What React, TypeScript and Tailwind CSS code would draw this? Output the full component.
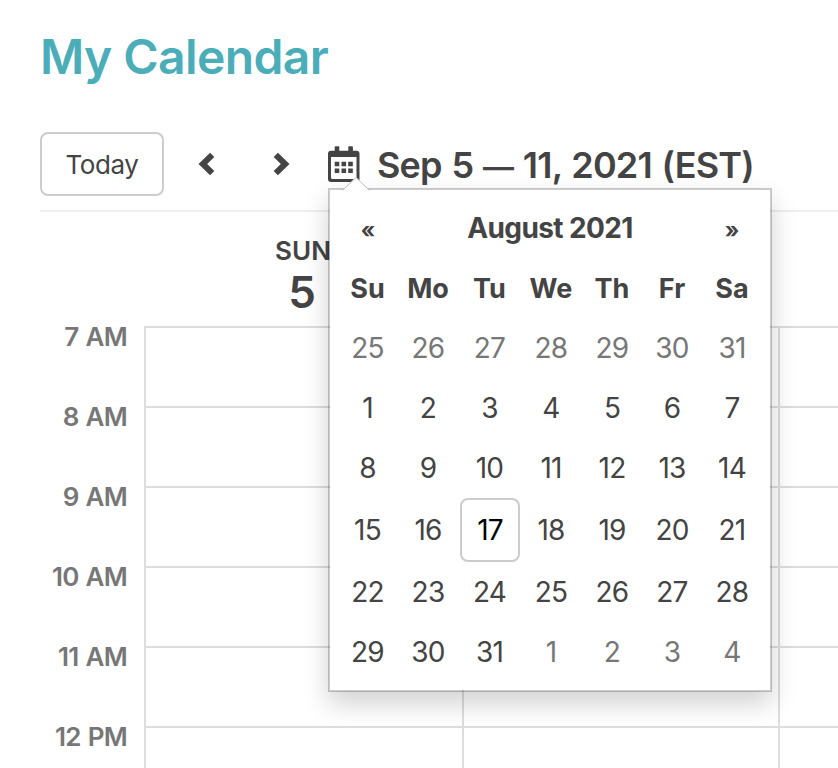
import React from "react";

const HOURS = ["7 AM", "8 AM", "9 AM", "10 AM", "11 AM", "12 PM"];

const WEEKDAYS = ["Su", "Mo", "Tu", "We", "Th", "Fr", "Sa"];

const WEEKS = [
  [25, 26, 27, 28, 29, 30, 31],
  [1, 2, 3, 4, 5, 6, 7],
  [8, 9, 10, 11, 12, 13, 14],
  [15, 16, 17, 18, 19, 20, 21],
  [22, 23, 24, 25, 26, 27, 28],
  [29, 30, 31, 1, 2, 3, 4],
];

const TODAY = 17;

const rowClass =
  "grid grid-cols-[59px_62px_61px_62px_60px_60px_60px] items-center text-center";

function isOutside(week: number, day: number) {
  return (week === 0 && day > 7) || (week === 5 && day < 7);
}

function CalendarIcon() {
  return (
    <svg className="w-8 h-9" viewBox="0 0 32 36" fill="#444">
      <rect x="6.700" y="0.300" width="4.600" height="8" rx="1" />
      <rect x="20.300" y="0.300" width="4.600" height="8" rx="1" />
      <path
        fillRule="evenodd"
        d="M3 4.700h25.500a3 3 0 0 1 3 3v25.300a3 3 0 0 1-3 3h-25.500a3 3 0 0 1-3-3V7.700a3 3 0 0 1 3-3zM3 11v20.500a1.500 1.500 0 0 0 1.500 1.500h22.500a1.500 1.500 0 0 0 1.500-1.500V11z"
      />
      <path d="M6.700 15.700h4.600v4.600H6.700zM13.500 15.700h4.600v4.600h-4.600zM20.200 15.700h4.600v4.600h-4.600zM6.700 22.500h4.600v4.600H6.700zM13.500 22.500h4.600v4.600h-4.600zM20.200 22.500h4.600v4.600h-4.600z" />
    </svg>
  );
}

function Chevron({ points }: { points: string }) {
  return (
    <svg className="w-6 h-6" viewBox="0 0 24 24" fill="none">
      <polyline
        points={points}
        stroke="#444"
        strokeWidth="6"
        strokeLinejoin="miter"
      />
    </svg>
  );
}

function DatePicker() {
  return (
    <div className="absolute left-0 top-[56px] z-10 w-[444px] h-[504px] bg-white border-2 border-black/20 bg-clip-padding p-2 shadow-[0_12px_24px_rgba(0,0,0,0.175)] text-[28px] leading-none text-[#444]">
      <svg
        className="absolute left-[11px] -top-[13px] w-[30px] h-[14px]"
        viewBox="0 0 30 14"
      >
        <path d="M1 14L15 0L29 14z" fill="#fff" />
        <path d="M1.500 13.500L15 0.500L28.500 13.500" fill="none" stroke="#bbb" />
      </svg>

      <div className="flex items-center h-[60px] font-bold text-center">
        <button className="w-[60px] pt-1 text-[22px]">«</button>
        <div className="flex-1 tracking-[-0.6px]">August 2021</div>
        <button className="w-[60px] pt-1 text-[22px]">»</button>
      </div>

      <div className={`${rowClass} h-[60px] text-[27px] font-bold`}>
        {WEEKDAYS.map((day) => (
          <span key={day}>{day}</span>
        ))}
      </div>

      {WEEKS.map((week, i) => (
        <div
          key={i}
          className={`${rowClass} tracking-[-0.8px] ${week.includes(TODAY) ? "h-[64px]" : "h-[60px]"}`}
        >
          {week.map((day) => (
            <button
              key={day}
              className={
                day === TODAY
                  ? "ml-px h-full border-2 border-[#ccc] rounded-lg text-black"
                  : isOutside(i, day)
                    ? "text-[#777]"
                    : ""
              }
            >
              {day}
            </button>
          ))}
        </div>
      ))}
    </div>
  );
}

export default function App() {
  return (
    <div className="w-[838px] h-[768px] overflow-hidden bg-white pl-10 text-[#444] font-['Inter','Liberation_Sans',sans-serif]">
      <h1 className="h-[132px] pt-[26px] text-[48px] leading-[62px] font-semibold tracking-[-0.6px] text-[#4badb7]">
        My Calendar
      </h1>

      {/* Toolbar */}
      <div className="flex h-[80px] border-b-2 border-[#eee] whitespace-nowrap">
        <button className="w-[124px] h-16 border-2 border-[#ccc] rounded-lg text-[26px] tracking-[-0.4px]">
          Today
        </button>
        <button className="ml-[30px] h-16">
          <Chevron points="18.200,2.800 8.800,12 18.200,21.200" />
        </button>
        <button className="ml-[52px] h-16">
          <Chevron points="5.800,2.800 15.200,12 5.800,21.200" />
        </button>
        <div className="relative ml-[34px] pt-[14px]">
          <CalendarIcon />
          <DatePicker />
        </div>
        <h2 className="ml-[17px] h-16 text-[36px] leading-[66px] font-semibold tracking-[-0.8px] [word-spacing:1.4px]">
          Sep 5 <span className="text-[31px]">—</span> 11, 2021 (EST)
        </h2>
      </div>

      {/* Day header */}
      <div className="flex h-[114px] pl-[105px]">
        <div className="w-[316px] pt-[26px] text-center font-semibold">
          <div className="text-[26px] leading-[26px]">SUN</div>
          <div className="pr-[2px] text-[44px] leading-[56px]">5</div>
        </div>
      </div>

      {/* Hours */}
      {HOURS.map((hour) => (
        <div key={hour} className="flex h-20">
          <div className="w-[104px] pr-[17px] text-right text-[26px] leading-[22px] font-semibold tracking-[-0.7px] [word-spacing:1px] text-[#777]">
            {hour}
          </div>
          <div className="w-[318px] border-t-2 border-l-2 border-[#ddd]" />
          <div className="w-[316px] border-t-2 border-l-2 border-[#ddd]" />
          <div className="flex-1 border-t-2 border-l-2 border-[#ddd]" />
        </div>
      ))}
    </div>
  );
}
